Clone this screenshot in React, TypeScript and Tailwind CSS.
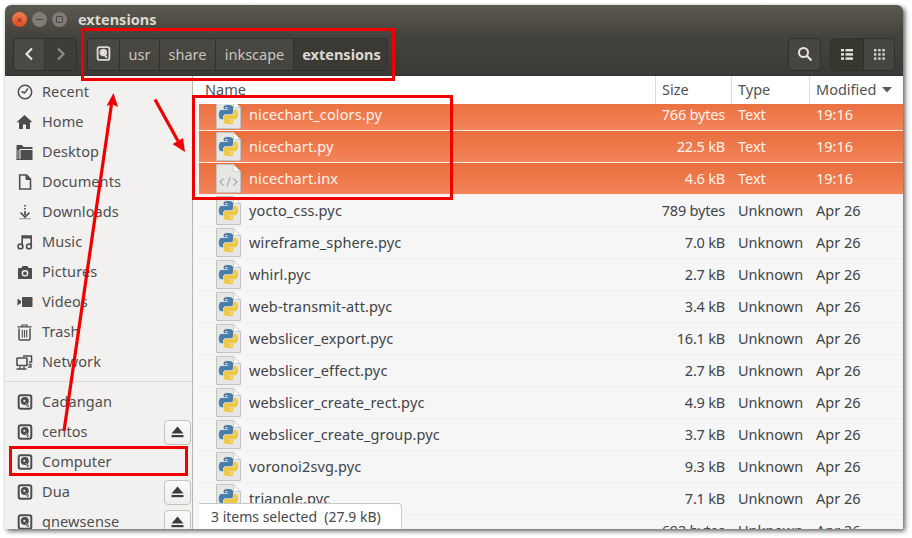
import React from "react";

const BLUE = "M14.25.18l.9.2.73.26.59.3.45.32.34.34.25.34.16.33.1.3.04.26.02.2-.01.13V8.5l-.05.63-.13.55-.21.46-.26.38-.3.31-.33.25-.35.19-.35.14-.33.1-.3.07-.26.04-.21.02H8.77l-.69.05-.59.14-.5.22-.41.27-.33.32-.27.35-.2.36-.15.37-.1.35-.07.32-.04.27-.02.21v3.06H3.17l-.21-.03-.28-.07-.32-.12-.35-.18-.36-.26-.36-.36-.35-.46-.32-.59-.28-.73-.21-.88-.14-1.05-.05-1.23.06-1.22.16-1.04.24-.87.32-.71.36-.57.4-.44.42-.33.42-.24.4-.16.36-.1.32-.05.24-.01h.16l.06.01h8.16v-.83H6.18l-.01-2.75-.02-.37.05-.34.11-.31.17-.28.25-.26.31-.23.38-.2.44-.18.51-.15.58-.12.64-.1.71-.06.77-.04.84-.02 1.27.05z";
const YELLOW = "M21.04 6.11l.28.06.32.12.35.18.36.27.36.35.35.47.32.59.28.73.21.88.14 1.04.05 1.23-.06 1.23-.16 1.04-.24.86-.32.71-.36.57-.4.45-.42.33-.42.24-.4.16-.36.09-.32.05-.24.02-.16-.01h-8.22v.82h5.84l.01 2.76.02.36-.05.34-.11.31-.17.29-.25.25-.31.24-.38.2-.44.17-.51.15-.58.13-.64.09-.71.07-.77.04-.84.01-1.27-.04-1.07-.14-.9-.2-.73-.25-.59-.3-.45-.33-.34-.34-.25-.34-.16-.33-.1-.3-.04-.25-.02-.2.01-.13v-5.34l.05-.64.13-.54.21-.46.26-.38.3-.32.33-.24.35-.2.35-.14.33-.1.3-.06.26-.04.21-.02.13-.01h5.84l.69-.05.59-.14.5-.21.41-.28.33-.32.27-.35.2-.36.15-.36.1-.35.07-.32.04-.28.02-.21V6.07h2.09l.14.01z";

function FileIcon({ kind }: { kind: "py" | "xml" }) {
  return (
    <svg width="25" height="29" viewBox="0 0 25 29" className="shrink-0">
      <path d="M.5.5H17.5L24.5 7.5V28.5H.5Z" fill="#e6e6e4" stroke="#c2c2be" />
      <path d="M17.5 .5V7.5H24.5Z" fill="#fbfbfa" stroke="#cdcdc9" />
      {kind === "py" ? (
        <g transform="translate(2.8 5) scale(.8)">
          <path d={BLUE} fill="#4a7dac" />
          <circle cx="9.3" cy="3.4" r="1.1" fill="#e6e6e4" />
          <path d={YELLOW} fill="#eec945" />
          <circle cx="15.4" cy="20.7" r="1.1" fill="#e6e6e4" />
        </g>
      ) : (
        <g fill="none" stroke="#a9a9a6" strokeWidth="1.2">
          <path d="M7.5 14.5L4 18L7.5 21.5" />
          <path d="M17.5 14.5L21 18L17.5 21.5" />
          <path d="M14 13.5L11 22.5" />
        </g>
      )}
    </svg>
  );
}

function Disk({ color = "#4d4d4d", size = 16 }: { color?: string; size?: number }) {
  return (
    <svg width={size} height={size} viewBox="0 0 16 16" className="shrink-0">
      <rect x="1.7" y="1.2" width="12.6" height="13.6" rx="2" fill="none" stroke={color} strokeWidth="2" />
      <circle cx="7.8" cy="7" r="4" fill={color} />
      <circle cx="7.3" cy="6.8" r="1.1" fill="#f2f1f0" />
      <path d="M8 8.5L11.5 12.5" stroke={color} strokeWidth="2" />
      <path d="M8.6 9L11.6 12.4" stroke="#f2f1f0" strokeWidth=".8" />
    </svg>
  );
}

const C = "#4d4d4d";
const icons: Record<string, React.ReactNode> = {
  Recent: (
    <svg width="16" height="16" viewBox="0 0 16 16">
      <circle cx="8" cy="8" r="6.7" fill="none" stroke={C} strokeWidth="1.5" />
      <path d="M4.5 7.5L7.5 9L11 4.5" fill="none" stroke={C} strokeWidth="1.4" />
    </svg>
  ),
  Home: (
    <svg width="17" height="16" viewBox="0 0 17 16">
      <path d="M8.5 1L.5 8.2H3V15H7V10.5H10V15H14V8.2H16.5Z" fill={C} />
    </svg>
  ),
  Desktop: (
    <svg width="17" height="17" viewBox="0 0 17 17">
      <path d="M.5 1H6L7.5 3H16.5V5H3.5V15.5H.5Z" fill={C} />
      <path d="M4.5 6H16.5V16H.5V15H4.5Z" fill={C} />
      <path d="M2 6V15" stroke="#f2f1f0" strokeWidth=".6" />
    </svg>
  ),
  Documents: (
    <svg width="14" height="16" viewBox="0 0 14 16">
      <path d="M1.7 1H8.5L12.5 5V15H1.7Z" fill="none" stroke={C} strokeWidth="1.6" />
      <path d="M8 1V5.5H12.5" fill={C} stroke={C} strokeWidth="1" />
    </svg>
  ),
  Downloads: (
    <svg width="16" height="16" viewBox="0 0 16 16">
      <path d="M8 1V2.5M8 4V5.5M8 7V11" stroke={C} strokeWidth="1.7" fill="none" />
      <path d="M3.5 8.5L8 13L12.5 8.5" fill="none" stroke={C} strokeWidth="1.7" />
      <path d="M2.5 14.7H13.5" stroke={C} strokeWidth=".6" />
    </svg>
  ),
  Music: (
    <svg width="16" height="16" viewBox="0 0 16 16">
      <circle cx="3.5" cy="12.4" r="2.4" fill="none" stroke={C} strokeWidth="1.6" />
      <circle cx="12" cy="12.4" r="2.4" fill="none" stroke={C} strokeWidth="1.6" />
      <path d="M5.2 12V2H14.2V12" fill="none" stroke={C} strokeWidth="1.6" />
      <path d="M5.2 3.2H14.2" stroke={C} strokeWidth="2.4" />
    </svg>
  ),
  Pictures: (
    <svg width="16" height="15" viewBox="0 0 16 15">
      <path d="M1.5 3H4.5L5.5 1H10.5L11.5 3H14.5A1 1 0 0 1 15 4V13.5A1 1 0 0 1 14.5 14H1.5A1 1 0 0 1 1 13.5V4A1 1 0 0 1 1.5 3Z" fill={C} />
      <circle cx="8" cy="8.3" r="3.3" fill="#f2f1f0" />
      <circle cx="8" cy="8.3" r="1.9" fill={C} />
    </svg>
  ),
  Videos: (
    <svg width="16" height="12" viewBox="0 0 16 12">
      <path d="M.5 2.5L4 5V7L.5 9.5Z" fill={C} />
      <rect x="5" y="1" width="10.5" height="10" rx=".6" fill={C} />
    </svg>
  ),
  Trash: (
    <svg width="15" height="17" viewBox="0 0 15 17">
      <path d="M.5 2.8H14.5M5 2.5V1H10V2.5" fill="none" stroke={C} strokeWidth="1.2" />
      <path d="M2 4.5V15.2A1 1 0 0 0 3 16H12A1 1 0 0 0 13 15.2V4.5" fill="none" stroke={C} strokeWidth="1.5" />
      <path d="M5.3 6V13.5M7.5 6V13.5M9.7 6V13.5" stroke={C} strokeWidth="1.1" />
    </svg>
  ),
  Network: (
    <svg width="17" height="15" viewBox="0 0 17 15">
      <rect x="1" y="3" width="10" height="7.5" rx=".5" fill="none" stroke={C} strokeWidth="1.6" />
      <path d="M4 11.5V14H0.5M8 11.5V14H10.5M2.5 14H9.5" stroke={C} strokeWidth="1.4" fill="none" />
      <path d="M7 .9H15.5V7H13" fill="none" stroke={C} strokeWidth="1.5" />
      <path d="M12.5 9.5L15 9.5L15 12L12 12" fill="none" stroke={C} strokeWidth="1.3" />
    </svg>
  ),
};

function Eject() {
  return (
    <button className="flex h-[25px] w-[27px] shrink-0 items-center justify-center rounded-[4px] border border-[#c4c2bd] bg-gradient-to-b from-[#fafafa] to-[#efeeec]">
      <svg width="13" height="12" viewBox="0 0 13 12">
        <path d="M6.5 .5L12.5 7.5H.5Z" fill="#3c3c3c" />
        <rect x=".5" y="9" width="12" height="2.2" fill="#3c3c3c" />
      </svg>
    </button>
  );
}

function SideRow({ name, icon, eject }: { name: string; icon: React.ReactNode; eject?: boolean }) {
  return (
    <div className="flex h-[30px] items-center pr-[1px]">
      <span className="flex w-[37px] shrink-0 justify-center pl-[2px]">{icon}</span>
      <span className="flex-1 text-[14.5px] tracking-[0.1px] text-[#4e4e4e]">{name}</span>
      {eject && <Eject />}
    </div>
  );
}

type F = { n: string; s: string; t: string; m: string; k?: "py" | "xml"; sel?: boolean };
const files: F[] = [
  { n: "nicechart_colors.py", s: "766 bytes", t: "Text", m: "19:16", sel: true },
  { n: "nicechart.py", s: "22.5 kB", t: "Text", m: "19:16", sel: true },
  { n: "nicechart.inx", s: "4.6 kB", t: "Text", m: "19:16", sel: true, k: "xml" },
  { n: "yocto_css.pyc", s: "789 bytes", t: "Unknown", m: "Apr 26" },
  { n: "wireframe_sphere.pyc", s: "7.0 kB", t: "Unknown", m: "Apr 26" },
  { n: "whirl.pyc", s: "2.7 kB", t: "Unknown", m: "Apr 26" },
  { n: "web-transmit-att.pyc", s: "3.4 kB", t: "Unknown", m: "Apr 26" },
  { n: "webslicer_export.pyc", s: "16.1 kB", t: "Unknown", m: "Apr 26" },
  { n: "webslicer_effect.pyc", s: "2.7 kB", t: "Unknown", m: "Apr 26" },
  { n: "webslicer_create_rect.pyc", s: "4.9 kB", t: "Unknown", m: "Apr 26" },
  { n: "webslicer_create_group.pyc", s: "3.7 kB", t: "Unknown", m: "Apr 26" },
  { n: "voronoi2svg.pyc", s: "9.3 kB", t: "Unknown", m: "Apr 26" },
  { n: "triangle.pyc", s: "7.1 kB", t: "Unknown", m: "Apr 26" },
  { n: "svgcalendar.pyc", s: "693 bytes", t: "Unknown", m: "Apr 26" },
];

function FileRow({ f }: { f: F }) {
  return (
    <div
      className={`flex h-[32px] shrink-0 items-center border-b text-[14.5px] ${
        f.sel
          ? "border-[#f8f0ec] bg-gradient-to-b from-[#e86d3c] to-[#f4855a] text-[#fdf3ee]"
          : "border-[#eeeeee] bg-[#f6f6f6] text-[#3f4447]"
      }`}
    >
      <span className="ml-[17px] flex w-[33px] shrink-0">
        <FileIcon kind={f.k ?? "py"} />
      </span>
      <span className="w-[400px] shrink-0 truncate tracking-[0.13px]">{f.n}</span>
      <span className="w-[76px] shrink-0 whitespace-nowrap text-right tracking-[-0.2px]">{f.s}</span>
      <span className="ml-[13px] w-[78px] shrink-0">{f.t}</span>
      <span>{f.m}</span>
    </div>
  );
}

function HeadCell({ w, children, border = true }: { w: string; children: React.ReactNode; border?: boolean }) {
  return (
    <div className={`flex h-full items-center pl-[6px] ${w} ${border ? "border-r border-[#dcdcda]" : ""}`}>{children}</div>
  );
}

export default function App() {
  return (
    <div className="relative h-[538px] w-[912px] overflow-hidden bg-white pl-[5px] pt-[5px]" style={{ fontFamily: '"Noto Sans", sans-serif' }}>
      <div className="flex h-[524px] w-[898px] flex-col overflow-hidden rounded-t-[6px] shadow-[2px_2px_5px_rgba(0,0,0,0.65)]">
        {/* Title bar */}
        <div className="flex h-[29px] shrink-0 items-center gap-[5px] bg-gradient-to-b from-[#5c5950] to-[#46443d] pl-[7px]">
          <span className="flex h-[15px] w-[15px] items-center justify-center rounded-full bg-gradient-to-b from-[#f08050] to-[#dd4a22] text-[11px] leading-none text-[#7a2a10]">×</span>
          <span className="flex h-[15px] w-[15px] items-center justify-center rounded-full bg-[#7f7d75]">
            <span className="h-[1.5px] w-[7px] bg-[#4a4842]" />
          </span>
          <span className="flex h-[15px] w-[15px] items-center justify-center rounded-full bg-[#7f7d75]">
            <span className="h-[7px] w-[7px] rounded-[1px] border border-[#4a4842]" />
          </span>
          <span className="ml-[6px] text-[14.5px] font-bold leading-none text-[#dcd9d0]">extensions</span>
        </div>
        {/* Toolbar */}
        <div className="flex h-[42px] shrink-0 items-center border-b border-[#33322e] bg-gradient-to-b from-[#45433d] to-[#3b3a36] pl-[8px] pr-[8px] pb-[1px]">
          <div className="flex h-[33px] w-[64px] overflow-hidden rounded-[4px] border border-[#312f2c] bg-[#4a4842]">
            <div className="flex w-[31px] items-center justify-center border-r border-[#38362f]">
              <svg width="10" height="14" viewBox="0 0 10 14"><path d="M8 1.5L2.5 7L8 12.5" fill="none" stroke="#e6e3dc" strokeWidth="2.2" /></svg>
            </div>
            <div className="flex flex-1 items-center justify-center bg-[#3f3d38]">
              <svg width="10" height="14" viewBox="0 0 10 14"><path d="M2 1.5L7.5 7L2 12.5" fill="none" stroke="#8f8c85" strokeWidth="2.2" /></svg>
            </div>
          </div>
          <div className="ml-[10px] flex h-[33px] w-[301px] overflow-hidden rounded-[4px] border border-[#312f2c] bg-gradient-to-b from-[#4a4843] to-[#45433e] text-[14.5px] text-[#c9c6be]">
            <div className="flex w-[32px] items-center justify-center border-r border-[#32312c] pb-[2px]">
              <Disk color="#dcd9d2" size={15} />
            </div>
            <div className="flex w-[40px] items-center justify-center border-r border-[#32312c] pt-[2px]">usr</div>
            <div className="flex w-[56px] items-center justify-center border-r border-[#32312c] pt-[2px]">share</div>
            <div className="flex w-[78px] items-center justify-center border-r border-[#32312c] pt-[2px]">inkscape</div>
            <div className="flex flex-1 items-center justify-center bg-[#3a3934] pl-[2px] pt-[2px] font-bold text-[#dcd9d2]">extensions</div>
          </div>
          <div className="ml-auto flex h-[33px] w-[33px] items-center justify-center rounded-[4px] border border-[#312f2c] bg-[#47453f]">
            <svg width="16" height="16" viewBox="0 0 16 16">
              <circle cx="6.5" cy="6.5" r="4.5" fill="none" stroke="#e6e3dc" strokeWidth="2" />
              <path d="M10 10L14.5 14.5" stroke="#e6e3dc" strokeWidth="2.2" />
            </svg>
          </div>
          <div className="ml-[9px] flex h-[33px] w-[65px] overflow-hidden rounded-[4px] border border-[#312f2c] bg-[#47453f]">
            <div className="flex w-[33px] items-center justify-center border-r border-[#312f2c] bg-[#38372f]">
              <svg width="12" height="11" viewBox="0 0 12 11" fill="#e6e3dc">
                <rect width="3" height="2.4" /><rect x="4.5" width="7.5" height="2.4" />
                <rect y="4.2" width="3" height="2.4" /><rect x="4.5" y="4.2" width="7.5" height="2.4" />
                <rect y="8.4" width="3" height="2.4" /><rect x="4.5" y="8.4" width="7.5" height="2.4" />
              </svg>
            </div>
            <div className="flex flex-1 items-center justify-center">
              <svg width="11" height="11" viewBox="0 0 11 11" fill="#dcd9d2">
                <rect width="2.4" height="2.4" /><rect x="4.2" width="2.4" height="2.4" /><rect x="8.4" width="2.4" height="2.4" />
                <rect y="4.2" width="2.4" height="2.4" /><rect x="4.2" y="4.2" width="2.4" height="2.4" /><rect x="8.4" y="4.2" width="2.4" height="2.4" />
                <rect y="8.4" width="2.4" height="2.4" /><rect x="4.2" y="8.4" width="2.4" height="2.4" /><rect x="8.4" y="8.4" width="2.4" height="2.4" />
              </svg>
            </div>
          </div>
        </div>
        {/* Body */}
        <div className="flex min-h-0 flex-1">
          <aside className="w-[188px] shrink-0 overflow-hidden border-r border-[#b8b7b2] bg-[#f2f1f0] pt-[1px]">
            {["Recent", "Home", "Desktop", "Documents", "Downloads", "Music", "Pictures", "Videos", "Trash", "Network"].map((n) => (
              <SideRow key={n} name={n} icon={icons[n]} />
            ))}
            <div className="mb-[5px] mt-[4px] h-px bg-[#dad8d5]" />
            <SideRow name="Cadangan" icon={<Disk />} />
            <SideRow name="centos" icon={<Disk />} eject />
            <SideRow name="Computer" icon={<Disk />} />
            <SideRow name="Dua" icon={<Disk />} eject />
            <SideRow name="gnewsense" icon={<Disk />} eject />
          </aside>
          <main className="flex min-w-0 flex-1 flex-col overflow-hidden bg-[#f6f6f6]">
            <div className="relative z-10 flex h-[28px] shrink-0 bg-white text-[14.5px] text-[#4e5356]">
              <div className="flex h-full w-[6px] shrink-0" />
              <HeadCell w="w-[457px]">Name</HeadCell>
              <HeadCell w="w-[76px]">Size</HeadCell>
              <HeadCell w="w-[78px]">Type</HeadCell>
              <HeadCell w="flex-1 gap-[6px]" border={false}>
                Modified
                <svg width="10" height="6" viewBox="0 0 10 6"><path d="M0 0H10L5 5.5Z" fill="#55595c" /></svg>
              </HeadCell>
            </div>
            <div className="ml-[6px] -mt-[5px] flex flex-col">
              {files.map((f) => (
                <FileRow key={f.n} f={f} />
              ))}
            </div>
          </main>
        </div>
      </div>

      {/* Floating status */}
      <div className="absolute left-[199px] top-[503px] z-20 flex h-[26px] w-[203px] items-center rounded-tr-[4px] border-r border-t border-[#c8c8c4] bg-white pl-[12px] text-[14px] text-[#45494c]">
        3 items selected&nbsp;&nbsp;(27.9 kB)
      </div>

      {/* Annotations */}
      <div className="absolute left-[81px] top-[28px] z-20 h-[53px] w-[314px] border-[3px] border-[#f00000]" />
      <div className="absolute left-[192px] top-[95px] z-20 h-[105px] w-[261px] border-[3px] border-[#f00000]" />
      <div className="absolute left-[9px] top-[446px] z-20 h-[30px] w-[179px] border-[3px] border-[#f00000]" />
      <svg className="absolute left-0 top-0 z-20" width="912" height="538">
        <path d="M64 431L111.5 104" stroke="#f00000" strokeWidth="3.2" fill="none" />
        <path d="M113.5 93L118 107L112 104L106.5 106Z" fill="#f00000" />
        <path d="M155 99.5L178 141" stroke="#f00000" strokeWidth="3.2" fill="none" />
        <path d="M185 152L172.5 144L178 141L183 138Z" fill="#f00000" />
      </svg>
    </div>
  );
}
